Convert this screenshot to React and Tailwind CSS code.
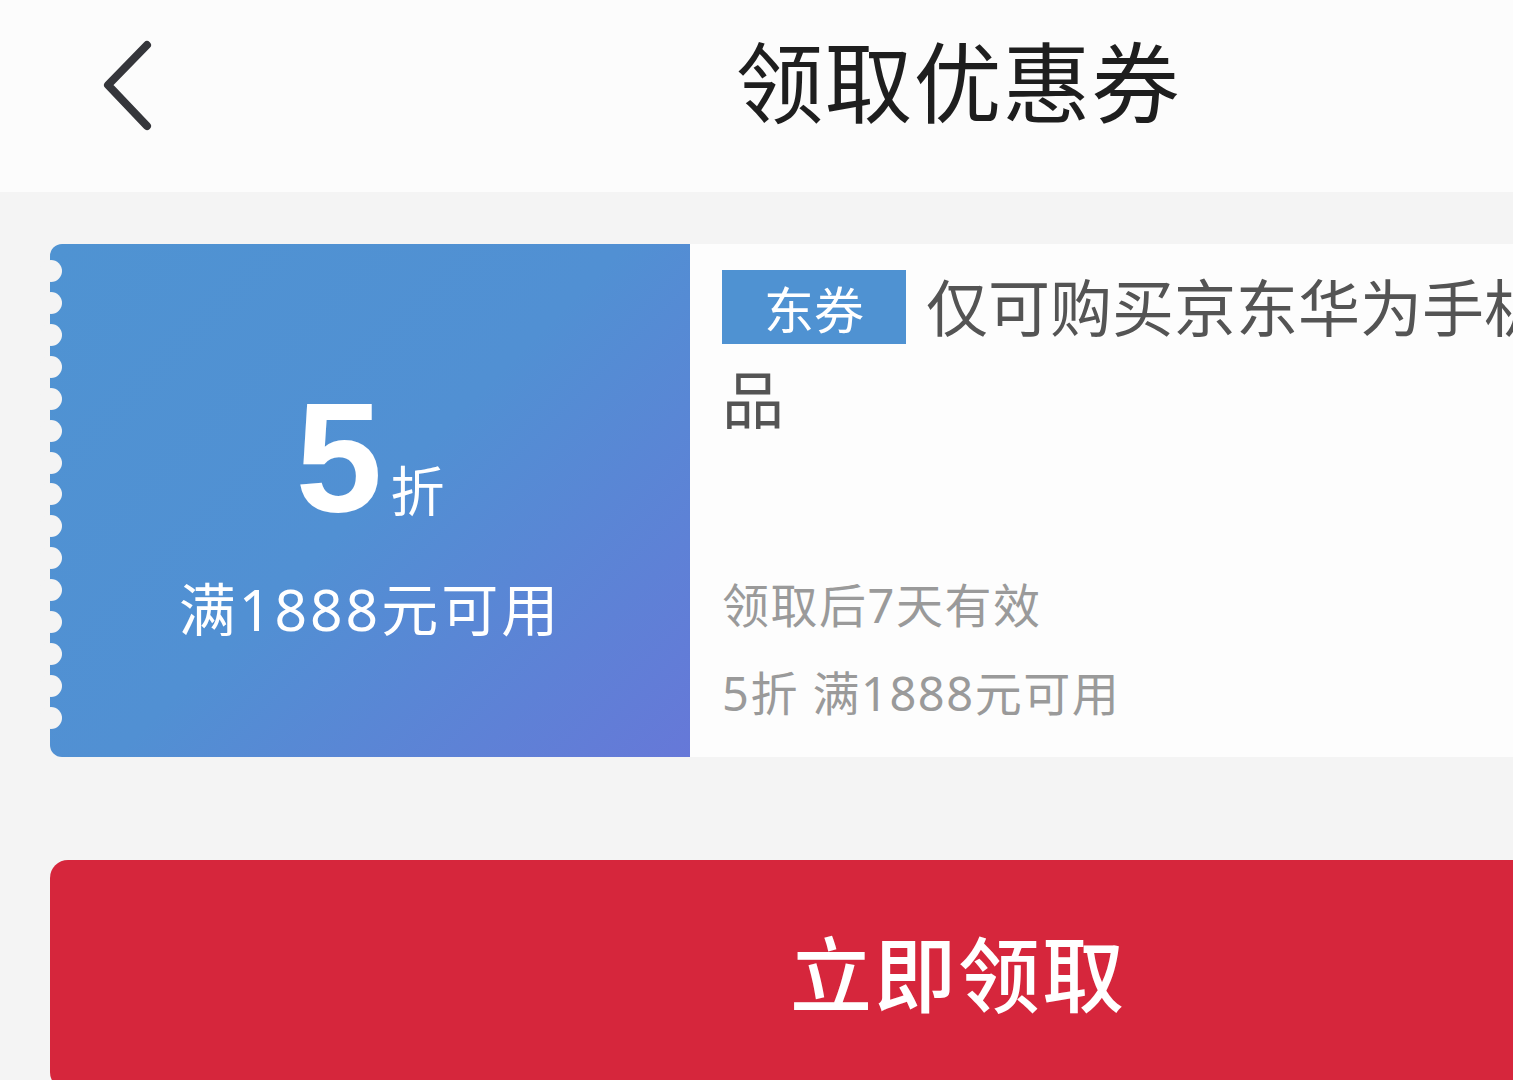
import React from 'react';

const cjk = { fontFamily: '"Noto Sans CJK SC", "Noto Sans", sans-serif' };
// wider latin digits in front of the CJK face
const mixed = { fontFamily: '"Noto Sans", "Noto Sans CJK SC", sans-serif' };

// little half-circle bites along the left edge of the coupon stub
const Scallops = () => (
  <div className="absolute left-[-10px] top-[16px] bottom-[28px] flex flex-col justify-between">
    {Array.from({ length: 15 }).map((_, i) => (
      <div key={i} className="h-[22px] w-[22px] rounded-full bg-[#f4f4f4]" />
    ))}
  </div>
);

const Header = () => (
  <div className="relative flex h-[192px] items-center justify-center bg-[#fcfcfc]">
    <button className="absolute left-[89px] top-[28px] p-2">
      <svg width="64" height="100" viewBox="0 0 64 100" fill="none">
        <path d="M50 9 L11 49 L50 90" stroke="#35363b" strokeWidth="8" strokeLinecap="round" strokeLinejoin="round" />
      </svg>
    </button>
    <h1 className="mt-[-36px] text-[88px] font-normal tracking-[1px] text-[#1e1e1e]" style={cjk}>
      领取优惠券
    </h1>
  </div>
);

const CouponCard = () => (
  <div className="mx-[50px] mt-[52px] flex h-[513px]" style={cjk}>
    <div className="relative flex w-[640px] shrink-0 flex-col items-center rounded-l-[12px] bg-[linear-gradient(135deg,#4f93d2_0%,#5190d3_50%,#6678d8_100%)] text-white">
      <Scallops />
      <div className="mt-[148px] flex items-end">
        <span className="text-[156px] font-bold leading-[130px]" style={{ fontFamily: '"Liberation Sans", Arial, sans-serif' }}>
          5
        </span>
        <span className="mb-[-2px] ml-[8px] text-[54px] leading-[70px]">折</span>
      </div>
      <div className="mt-[52px] text-[57px] leading-[70px] tracking-[3px]" style={mixed}>
        满1888元可用
      </div>
    </div>

    <div className="flex flex-1 flex-col bg-[#fdfdfd] pl-[32px] pt-[16px] pb-[20px]">
      <p className="w-[940px] text-[62px] leading-[90px] text-[#545454]">
        <span className="relative top-[-8px] mr-[20px] inline-block h-[74px] w-[184px] bg-[#4f92d2] text-center align-middle text-[50px] leading-[74px] text-white">
          东券
        </span>
        仅可购买京东华为手机商品
      </p>
      <div className="mt-auto text-[47px] leading-[88px] tracking-[1.5px] text-[#9a9a9a]" style={mixed}>
        <div>领取后7天有效</div>
        <div>5折 满1888元可用</div>
      </div>
    </div>
  </div>
);

export default function App() {
  return (
    <div className="h-[1080px] w-full overflow-hidden bg-[#f4f4f4]">
      <div className="w-[1916px]">
        <Header />
        <CouponCard />
        <div className="mx-[50px] mt-[103px]">
          <button className="flex h-[230px] w-full items-center justify-center rounded-[18px] bg-[#d6263c]" style={cjk}>
            <span className="mt-[-10px] text-[82px] font-medium tracking-[2px] text-white">立即领取</span>
          </button>
        </div>
      </div>
    </div>
  );
}
